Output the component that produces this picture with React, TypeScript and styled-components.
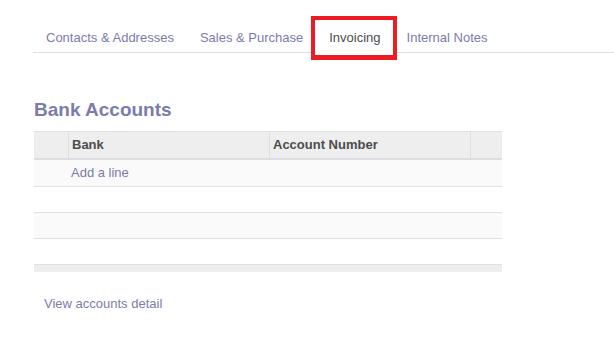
import styled, { createGlobalStyle } from 'styled-components'

const GlobalStyle = createGlobalStyle`
  html, body {
    margin: 0;
    padding: 0;
    background: #fff;
  }
  body {
    font-family: "Liberation Sans", Arial, sans-serif;
    font-size: 13px;
    color: #4c4c4c;
  }
`

const Page = styled.div`
  padding-top: 20px;
`

const TabBar = styled.ul`
  display: flex;
  list-style: none;
  margin: 0 0 0 33px;
  padding: 0;
  border-bottom: 1px solid #dee0e3;
`

const Tab = styled.li<{ $active?: boolean }>`
  position: relative;
  padding: 8px 13px 5px;
  line-height: 19px;
  color: ${(p) => (p.$active ? '#4c4c4c' : '#7c7bad')};
  background: #fff;
  cursor: pointer;
  white-space: nowrap;
  ${(p) => p.$active && 'margin-bottom: -1px; border-bottom: 1px solid #fff;'}
`

// red annotation box drawn over the selected tab
const Highlight = styled.span`
  position: absolute;
  z-index: 2;
  top: -4px;
  left: -5px;
  width: 86px;
  height: 44px;
  box-sizing: border-box;
  border-style: solid;
  border-color: #ed1c24;
  border-width: 4px 4px 5px 4px;
  pointer-events: none;
`

const Content = styled.div`
  padding-left: 34px;
`

const Heading = styled.h2`
  margin: 45px 0 10px;
  font-size: 19px;
  line-height: 23px;
  font-weight: bold;
  color: #7c7bad;
`

const Table = styled.div`
  width: 468px;
  border-top: 1px solid #e0e0e4;
`

const HeadRow = styled.div`
  display: grid;
  grid-template-columns: 34px 201px 201px 1fr;
  height: 26px;
  background: #eeeeee;
  border-bottom: 2px solid #dcdce2;
`

const HeadCell = styled.div<{ $sep?: boolean }>`
  border-left: ${(p) => (p.$sep ? '1px solid #dddde2' : 'none')};
  padding-left: 3px;
  line-height: 26px;
  font-weight: bold;
  color: #4c4c4c;
`

const Row = styled.div<{ $striped?: boolean; $tall?: boolean }>`
  height: ${(p) => (p.$tall ? 26 : 25)}px;
  line-height: ${(p) => (p.$tall ? 26 : 25)}px;
  padding-left: 37px;
  background: ${(p) => (p.$striped ? '#fafafa' : '#fff')};
  border-bottom: 1px solid #e0e0e4;
  color: #7c7bad;
`

const Footer = styled.div`
  height: 7px;
  background: #eeeeee;
`

const Link = styled.a`
  display: block;
  margin: 22px 0 0 10px;
  line-height: 20px;
  color: #7c7bad;
  text-decoration: none;
  cursor: pointer;
`

const tabs = ['Contacts & Addresses', 'Sales & Purchase', 'Invoicing', 'Internal Notes']

export default function App() {
  return (
    <Page>
      <GlobalStyle />
      <TabBar>
        {tabs.map((t) => (
          <Tab key={t} $active={t === 'Invoicing'}>
            {t}
            {t === 'Invoicing' && <Highlight />}
          </Tab>
        ))}
      </TabBar>
      <Content>
        <Heading>Bank Accounts</Heading>
        <Table>
          <HeadRow>
            <HeadCell />
            <HeadCell $sep>Bank</HeadCell>
            <HeadCell $sep>Account Number</HeadCell>
            <HeadCell $sep />
          </HeadRow>
          <Row $striped $tall>Add a line</Row>
          <Row />
          <Row $striped />
          <Row />
          <Footer />
        </Table>
        <Link>View accounts detail</Link>
      </Content>
    </Page>
  )
}
